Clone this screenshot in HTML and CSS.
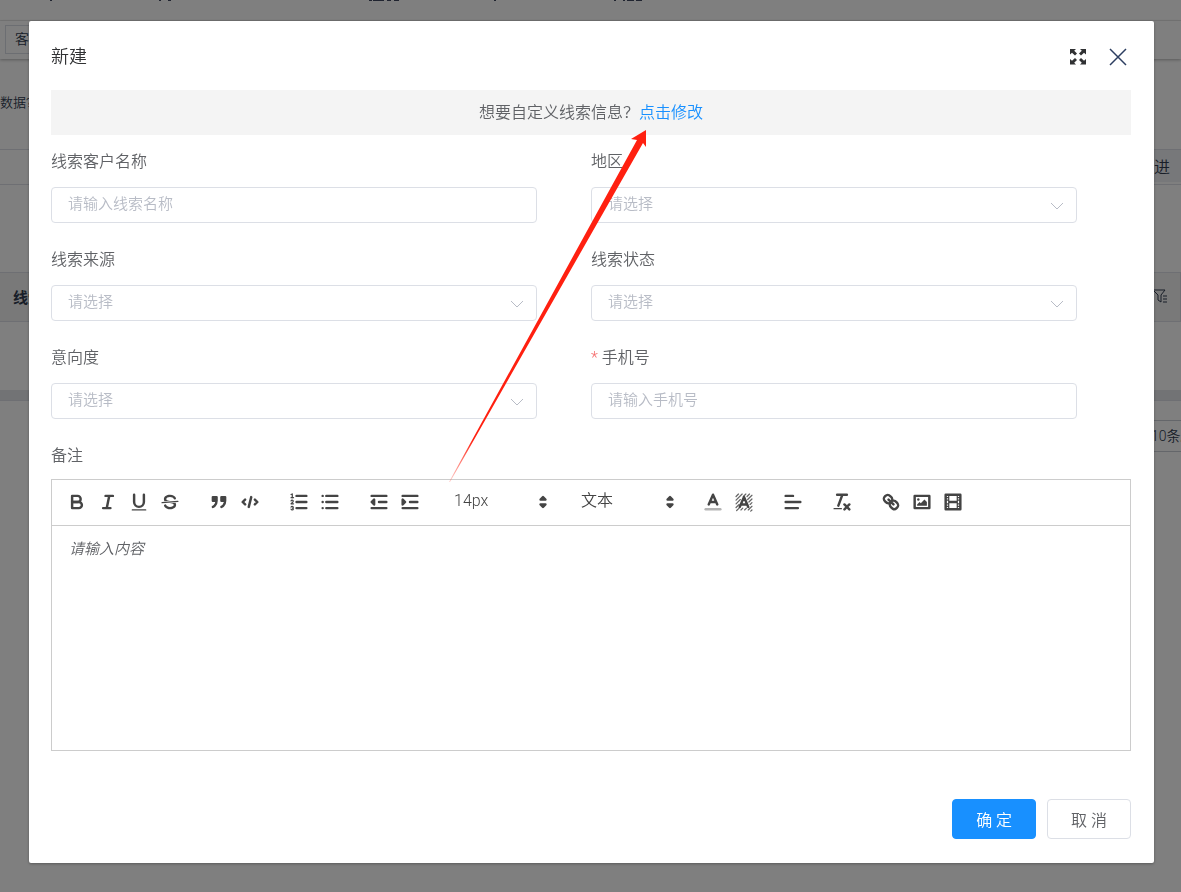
FILE: index.html
```html
<!DOCTYPE html>
<html lang="zh-CN">
<head>
  <meta charset="UTF-8">
  <meta name="viewport" content="width=device-width, initial-scale=1.0">
  <title>新建线索</title>
  <link rel="stylesheet" href="styles.css">
</head>
<body>
  <!-- 列表页 -->
  <div class="page">
    <div class="navbar">
      <svg class="nav-marks" width="660" height="2" viewBox="0 0 660 2" aria-hidden="true">
        <path d="M50 0h2v1h-2zM159 0h2v1h-2zM168 0h3v1h-3zM369 0h3v1h-3zM373 0h11v1h-11zM387 0h4v1h-4zM394 0h5v1h-5zM494 0h2v1h-2zM614 0h2v1h-2zM623 0h2v1h-2zM627 0h7v1h-7zM636 0h6v1h-6z"/>
      </svg>
    </div>
    <div class="tabs-bar"><a href="#" class="tab">客户</a></div>
    <div class="page-tip">数据?</div>
    <div class="filter-row">
      <button type="button" class="follow-btn">跟进</button>
    </div>
    <div class="table-head">
      <span>线索</span>
      <svg width="16" height="16" viewBox="0 0 16 16" aria-hidden="true">
        <path d="M1 2h12L9 7v7l-3-2V7zM11 8h4M11 11h4M11 14h4"/>
      </svg>
    </div>
    <div class="table-body"></div>
    <div class="table-scroll"></div>
    <div class="pager"><div class="page-size">10条/页</div></div>
  </div>

  <!-- 新建弹窗 -->
  <div class="mask">
    <div class="dialog" role="dialog" aria-labelledby="dialog-title">
      <div class="dialog-header">
        <h2 id="dialog-title">新建</h2>
        <div class="dialog-tools">
          <button type="button" aria-label="全屏">
            <svg width="18" height="18" viewBox="0 0 18 18" class="full-icon">
              <path d="M1 1h6L5.200 2.800 8 5.500 6 7.500 3 4.800 1 6.500zM17 1v5.500L15 4.800 12 7.500 10 5.500 12.800 2.800 11 1zM1 16.500V11l2 1.700L6 10l2 2-2.800 2.700L7 16.500zM17 16.500h-6l1.800-1.800L10 12l2-2 3 2.700 2-1.700z"/>
            </svg>
          </button>
          <button type="button" aria-label="关闭">
            <svg width="18" height="18" viewBox="0 0 18 18" class="close-icon">
              <path d="M1 1l16 16M17 1L1 17"/>
            </svg>
          </button>
        </div>
      </div>

      <div class="banner">想要自定义线索信息？<a href="#">点击修改</a></div>

      <form class="form">
        <div class="form-grid">
          <div class="form-item">
            <label for="name">线索客户名称</label>
            <div class="control"><input id="name" type="text" placeholder="请输入线索名称"></div>
          </div>
          <div class="form-item">
            <label for="area">地区</label>
            <div class="control">
              <select id="area"><option>请选择</option></select>
              <svg class="chevron" width="14" height="14" viewBox="0 0 14 14"><path d="M1 4l6 6 6-6"/></svg>
            </div>
          </div>
          <div class="form-item">
            <label for="source">线索来源</label>
            <div class="control">
              <select id="source"><option>请选择</option></select>
              <svg class="chevron" width="14" height="14" viewBox="0 0 14 14"><path d="M1 4l6 6 6-6"/></svg>
            </div>
          </div>
          <div class="form-item">
            <label for="status">线索状态</label>
            <div class="control">
              <select id="status"><option>请选择</option></select>
              <svg class="chevron" width="14" height="14" viewBox="0 0 14 14"><path d="M1 4l6 6 6-6"/></svg>
            </div>
          </div>
          <div class="form-item">
            <label for="intent">意向度</label>
            <div class="control">
              <select id="intent"><option>请选择</option></select>
              <svg class="chevron" width="14" height="14" viewBox="0 0 14 14"><path d="M1 4l6 6 6-6"/></svg>
            </div>
          </div>
          <div class="form-item">
            <label for="phone"><span class="required">*</span>手机号</label>
            <div class="control"><input id="phone" type="tel" placeholder="请输入手机号"></div>
          </div>
        </div>

        <label for="remark">备注</label>
        <div class="editor">
          <div class="toolbar">
            <div class="group">
              <button type="button" aria-label="加粗"><svg viewBox="0 0 18 18"><path d="M5,4H9.500A2.500,2.500,0,0,1,12,6.500v0A2.500,2.500,0,0,1,9.500,9H5V4Z"/><path d="M5,9h5.500A2.500,2.500,0,0,1,13,11.500v0A2.500,2.500,0,0,1,10.500,14H5V9Z"/></svg></button>
              <button type="button" aria-label="斜体"><svg viewBox="0 0 18 18"><path d="M7 4H13M5 14H11M8 14L10 4"/></svg></button>
              <button type="button" aria-label="下划线"><svg viewBox="0 0 18 18"><path d="M5,3V9a4.012,4.012,0,0,0,4,4H9a4.012,4.012,0,0,0,4-4V3"/><rect class="fill" x="3" y="15" width="12" height="1" rx="0.500"/></svg></button>
              <button type="button" aria-label="删除线"><svg viewBox="0 0 18 18"><path class="thin" d="M15.500 8.500L2.500 9.500"/><path class="fill" d="M9.007,8C6.542,7.791,6,7.519,6,6.500,6,5.792,7.283,5,9,5c1.571,0,2.765.679,2.969,1.309a1,1,0,0,0,1.900-.617C13.356,4.106,11.354,3,9,3,6.200,3,4,4.538,4,6.500a3.200,3.200,0,0,0,.5,1.843Z"/><path class="fill" d="M8.984,10C11.457,10.208,12,10.479,12,11.500c0,0.708-1.283,1.500-3,1.500-1.571,0-2.765-.679-2.969-1.309a1,1,0,1,0-1.900.617C4.644,13.894,6.646,15,9,15c2.800,0,5-1.538,5-3.500a3.200,3.200,0,0,0-.5-1.843Z"/></svg></button>
            </div>
            <div class="group">
              <button type="button" aria-label="引用"><svg viewBox="0 0 18 18"><path class="both" d="M4 5h3v3H4zM11 5h3v3h-3zM7,8c0,4.031-3,5-3,5M14,8c0,4.031-3,5-3,5"/></svg></button>
              <button type="button" aria-label="代码"><svg viewBox="0 0 18 18"><path d="M5 7L3 9l2 2M13 7l2 2-2 2M10 5L8 13"/></svg></button>
            </div>
            <div class="group">
              <button type="button" aria-label="有序列表"><svg viewBox="0 0 18 18"><path d="M7 4h8M7 9h8M7 14h8"/><path class="thin" d="M2.500 5.500h2"/><path class="fill" d="M3.500,6A0.500,0.500,0,0,1,3,5.500V3.085l-0.276.138A0.500,0.500,0,0,1,2.053,3c-0.124-.247-0.023-0.324.224-0.447l1-.5A0.500,0.500,0,0,1,4,2.500v3A0.500,0.500,0,0,1,3.500,6Z"/><path class="thin" d="M4.500,10.500h-2c0-.234,1.850-1.076,1.850-2.234A0.959,0.959,0,0,0,2.500,8.156"/><path class="thin" d="M2.500,14.846a0.959,0.959,0,0,0,1.850-.109A0.700,0.700,0,0,0,3.750,14a0.688,0.688,0,0,0,.6-0.736,0.959,0.959,0,0,0-1.850-.109"/></svg></button>
              <button type="button" aria-label="无序列表"><svg viewBox="0 0 18 18"><path d="M6 4h9M6 9h9M6 14h9M3 4h0M3 9h0M3 14h0"/></svg></button>
            </div>
            <div class="group">
              <button type="button" aria-label="减少缩进"><svg viewBox="0 0 18 18"><path d="M3 14h12M3 4h12M9 9h6"/><path class="both" d="M5 7v4L3 9z"/></svg></button>
              <button type="button" aria-label="增加缩进"><svg viewBox="0 0 18 18"><path d="M3 14h12M3 4h12M9 9h6"/><path class="both" d="M3 7v4l2-2z"/></svg></button>
            </div>
            <div class="picker">
              <select aria-label="字号"><option>14px</option></select>
              <svg viewBox="0 0 18 18"><path class="both" d="M7 11l2 2 2-2zM7 7l2-2 2 2z"/></svg>
            </div>
            <div class="picker">
              <select aria-label="段落格式"><option>文本</option></select>
              <svg viewBox="0 0 18 18"><path class="both" d="M7 11l2 2 2-2zM7 7l2-2 2 2z"/></svg>
            </div>
            <div class="group">
              <button type="button" aria-label="文字颜色"><svg viewBox="0 0 18 18"><path class="pale" d="M3 15h12"/><path d="M5.500 11L9 3l3.500 8M11.630 9H6.380"/></svg></button>
              <button type="button" aria-label="背景颜色"><svg viewBox="0 0 18 18"><path class="hatch" d="M2.500 4.500l2-2M2.500 7.500l5-5M2.500 10.500L6 7M2.500 13.500L5 11M8.500 4.500l2-2M3 16l2-2M11.500 4.500l2-2M12 7l3.500-3.500M13 9l2.500-2.500M14 11l1.500-1.500M6.500 15.500L8 14M9.500 15.500L11 14M12.500 15.500l3-3M14.500 16.500l1-1"/><path d="M5.500 13L9 5l3.500 8M11.630 11H6.380"/></svg></button>
            </div>
            <div class="group">
              <button type="button" aria-label="对齐"><svg viewBox="0 0 18 18"><path d="M3 9h12M3 14h10M3 4h6"/></svg></button>
            </div>
            <div class="group">
              <button type="button" aria-label="清除格式"><svg viewBox="0 0 18 18"><path d="M5 3h8M6 12L9.350 3M11 11l4 4M15 11l-4 4"/><rect class="fill" x="2" y="14" width="7" height="1" rx="0.500"/></svg></button>
            </div>
            <div class="group">
              <button type="button" aria-label="链接"><svg viewBox="0 0 18 18"><path d="M7 7l4 4M8.900,4.577a3.476,3.476,0,0,1,.36,4.679A3.476,3.476,0,0,1,4.577,8.900C3.185,7.500,2.035,6.400,4.217,4.217S7.500,3.185,8.900,4.577ZM13.423,9.100a3.476,3.476,0,0,0-4.679-.36,3.476,3.476,0,0,0,.36,4.679c1.392,1.392,2.500,2.542,4.679.36S14.815,10.500,13.423,9.100Z"/></svg></button>
              <button type="button" aria-label="图片"><svg viewBox="0 0 18 18"><rect x="3" y="4" width="12" height="10"/><circle class="fill" cx="6" cy="7" r="1"/><path class="fill" d="M5 12v-1l2-2 1 1 3-3 2 2v3z"/></svg></button>
              <button type="button" aria-label="视频"><svg viewBox="0 0 18 18"><rect x="3" y="3" width="12" height="12"/><path class="fill" d="M5 3h1v12H5zM12 3h1v12h-1zM5 8h8v2H5zM3 5h3v1H3zM3 7h3v1H3zM3 10h3v1H3zM3 12h3v1H3zM12 5h3v1h-3zM12 7h3v1h-3zM12 10h3v1h-3zM12 12h3v1h-3z"/></svg></button>
            </div>
          </div>
          <textarea id="remark" placeholder="请输入内容"></textarea>
        </div>

        <div class="dialog-footer">
          <button type="submit" class="btn btn-primary">确 定</button>
          <button type="button" class="btn">取 消</button>
        </div>
      </form>

      <!-- 红色指引箭头 -->
      <svg class="guide-arrow" width="200" height="354" viewBox="0 0 200 354" aria-hidden="true">
        <defs>
          <linearGradient id="fade" x1="0" y1="1" x2="0" y2="0">
            <stop offset="0" stop-color="#ff2010" stop-opacity="0.200"/>
            <stop offset="0.120" stop-color="#ff2010"/>
          </linearGradient>
        </defs>
        <path fill="url(#fade)" d="M197 0L182 9l6 1L0 352h1L194 13l3 4z"/>
      </svg>
    </div>
  </div>
</body>
</html>
```
FILE: styles.css
```css
* {
  margin: 0;
  padding: 0;
  box-sizing: border-box;
}

body {
  font-family: Roboto, 'Noto Sans CJK SC', sans-serif;
  font-size: 16px;
  font-weight: 350;
  color: #606266;
  background-color: #fff;
  overflow: hidden;
}

button,
input,
select,
textarea {
  font: inherit;
  color: inherit;
}

button {
  background: none;
  border: none;
  cursor: pointer;
}

a {
  color: #1890ff;
  text-decoration: none;
}

/* 列表页 */
.page {
  min-height: 100vh;
  color: #303c50;
}

.navbar {
  height: 21px;
  border-bottom: 1px solid #ececec;
}

.nav-marks {
  display: block;
  fill: #404860;
}

.tabs-bar {
  height: 38px;
  padding: 4px 5px;
  box-shadow: 0 1px 3px rgba(0, 0, 0, 0.3);
}

.tab {
  display: inline-block;
  height: 29px;
  padding: 0 9px;
  border: 1px solid #d8dce5;
  font-size: 14px;
  line-height: 27px;
  color: #303c50;
}

.page-tip {
  height: 90px;
  font-size: 13px;
  line-height: 88px;
}

.filter-row {
  display: flex;
  align-items: flex-start;
  justify-content: flex-end;
  height: 36px;
  margin-bottom: 87px;
  border-top: 1px solid #dcdfe6;
  border-bottom: 1px solid #dcdfe6;
}

.follow-btn {
  height: 32px;
  padding: 0 11px;
  background-color: #eef0f4;
}

.table-head {
  display: flex;
  align-items: center;
  justify-content: space-between;
  height: 50px;
  padding: 0 12px 2px 13px;
  border: 1px solid #dcdfe6;
  border-left: none;
  background-color: #f2f2f2;
  font-size: 15px;
  font-weight: 700;
}

.table-head svg {
  fill: none;
  stroke: #303c50;
}

.table-body {
  height: 68px;
}

.table-scroll {
  height: 11px;
  background-color: #e4e7ea;
  border-bottom: 1px solid #dcdfe6;
}

.pager {
  display: flex;
  justify-content: flex-end;
  padding-top: 19px;
}

.page-size {
  width: 38px;
  height: 32px;
  padding-left: 7px;
  border: 1px solid #c8ccd4;
  border-right: none;
  font-size: 14px;
  line-height: 30px;
  white-space: nowrap;
  overflow: hidden;
}

/* 弹窗 */
.mask {
  position: fixed;
  inset: 0;
  padding: 21px 27px 21px 29px;
  background-color: rgba(0, 0, 0, 0.5);
  overflow-y: auto;
}

.dialog {
  position: relative;
  padding: 0 23px 24px 22px;
  background-color: #fff;
  border-radius: 2px;
  box-shadow: 0 1px 3px rgba(0, 0, 0, 0.3);
}

.dialog-header {
  display: flex;
  align-items: center;
  justify-content: space-between;
  height: 69px;
}

.dialog-header h2 {
  padding-bottom: 2px;
  font-size: 18px;
  font-weight: inherit;
  color: #303133;
}

.dialog-tools {
  display: flex;
  gap: 22px;
  padding: 3px 4px 0 0;
}

.dialog-tools button,
.dialog-tools svg {
  display: block;
}

.full-icon {
  fill: #303133;
}

.close-icon {
  fill: none;
  stroke: #2c3e60;
  stroke-width: 1.5;
}

.banner {
  margin-bottom: 12px;
  background-color: #f4f4f4;
  line-height: 45px;
  text-align: center;
}

/* 表单 */
.form-grid {
  display: grid;
  grid-template-columns: 1fr 1fr;
}

.form-item {
  margin-bottom: 20px;
}

.form label {
  display: block;
  padding-bottom: 8px;
  line-height: 30px;
}

.required {
  margin-right: 4px;
  color: #f56c6c;
}

.control {
  position: relative;
  width: 90%;
  padding: 2px 0;
}

.control input,
.control select {
  display: block;
  width: 100%;
  height: 36px;
  padding: 0 16px 2px;
  border: 1px solid #dcdfe6;
  border-radius: 4px;
  background-color: #fff;
  font-size: 15px;
  color: #b8bcc6;
  appearance: none;
  outline: none;
}

.control input {
  color: #606266;
}

.control input::placeholder {
  color: #b8bcc6;
}

.chevron {
  position: absolute;
  top: 14px;
  right: 13px;
  fill: none;
  stroke: #b8bcc6;
  pointer-events: none;
}

/* 富文本编辑器 */
.editor {
  border: 1px solid #ccc;
}

.toolbar {
  display: flex;
  flex-wrap: wrap;
  align-items: center;
  gap: 0 21px;
  min-height: 46px;
  padding: 0 11px 2px;
  border-bottom: 1px solid #ccc;
}

.group {
  display: flex;
  gap: 3px;
}

.group button {
  width: 28px;
  height: 24px;
}

.toolbar svg {
  display: block;
  width: 22px;
  height: 22px;
  margin: 0 auto;
  fill: none;
  stroke: #444;
  stroke-width: 2;
  stroke-linecap: round;
  stroke-linejoin: round;
}

.toolbar .fill {
  fill: #444;
  stroke: none;
}

.toolbar .both {
  fill: #444;
}

.toolbar .thin {
  stroke-width: 1;
}

.toolbar .hatch {
  stroke: #666;
  stroke-width: 1;
}

.toolbar .pale {
  stroke: #b4b4b4;
}

.picker {
  position: relative;
  width: 106px;
}

.picker select {
  display: block;
  width: 100%;
  height: 24px;
  padding: 0 9px 2px;
  border: none;
  background: none;
  color: #444;
  appearance: none;
}

.picker svg {
  position: absolute;
  top: 1px;
  right: -3px;
  pointer-events: none;
}

.editor textarea {
  display: block;
  width: 100%;
  height: 224px;
  padding: 12px 17px;
  border: none;
  outline: none;
  resize: none;
  font-size: 15px;
  line-height: 22px;
}

.editor textarea::placeholder {
  color: #606266;
  font-style: italic;
}

/* 底部按钮 */
.dialog-footer {
  display: flex;
  justify-content: flex-end;
  gap: 11px;
  padding-top: 48px;
}

.btn {
  height: 40px;
  padding: 0 23px;
  border: 1px solid #dcdfe6;
  border-radius: 4px;
}

.btn-primary {
  border-color: #1890ff;
  background-color: #1890ff;
  color: #fff;
}

.guide-arrow {
  position: absolute;
  top: 109px;
  left: 420px;
  pointer-events: none;
}
```
